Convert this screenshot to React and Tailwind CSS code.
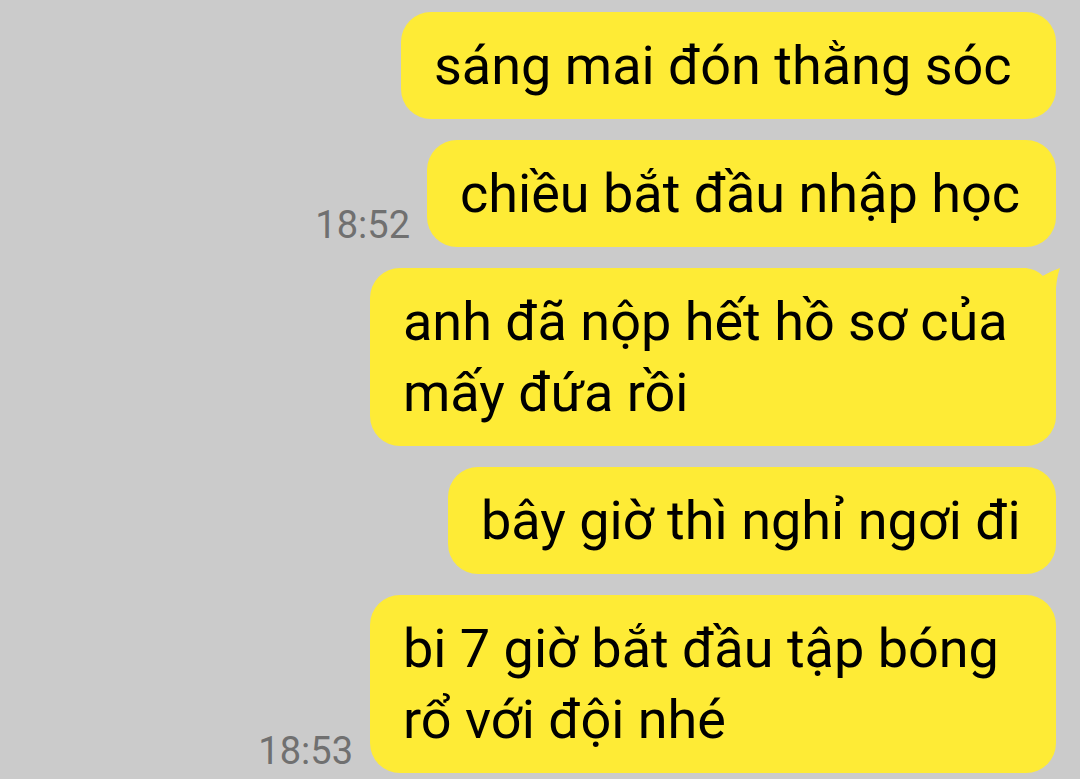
const messages = [
  { text: 'sáng mai đón thằng sóc', w: 'w-[655px]' },
  { text: 'chiều bắt đầu nhập học', w: 'w-[629px]', time: '18:52' },
  { text: 'anh đã nộp hết hồ sơ của mấy đứa rồi', w: 'w-[686px]', tail: true },
  { text: 'bây giờ thì nghỉ ngơi đi', w: 'w-[608px]' },
  { text: 'bi 7 giờ bắt đầu tập bóng rổ với đội nhé', w: 'w-[686px]', time: '18:53' },
];

// little notch + tip on the top-right corner of the bubble
function Tail() {
  return (
    <svg className="absolute top-0 -right-[4px]" width="34" height="30" viewBox="0 0 34 30">
      <path d="M0 -1 L34 -1 L34 0 Q26 3 17 8 Q10 1 0 0 Z" fill="#cbcbcb" />
      <path d="M17 8 Q26 3 34 0 Q31 8 30 20 L30 30 L17 30 Z" fill="#feeb36" />
    </svg>
  );
}

export default function App() {
  return (
    <div className="w-[1080px] h-[779px] bg-[#cbcbcb] overflow-hidden" style={{ fontFamily: 'Roboto, "Noto Sans", sans-serif' }}>
      <div className="flex flex-col items-end gap-[21px] pt-[12px] pr-[24px]">
        {messages.map((m, i) => (
          <div key={i} className="flex items-end gap-[17px]">
            {m.time && (
              <span className="text-[38px] leading-none text-[#707070] pb-[3px]">{m.time}</span>
            )}
            <div className={`relative ${m.w} bg-[#feeb36] ${m.tail ? 'rounded-[30px] rounded-tr-none' : 'rounded-[30px]'} px-[33px] py-[18px] text-[54px] leading-[71px] text-black`}>
              {m.tail && <Tail />}
              {m.text}
            </div>
          </div>
        ))}
      </div>
    </div>
  );
}
